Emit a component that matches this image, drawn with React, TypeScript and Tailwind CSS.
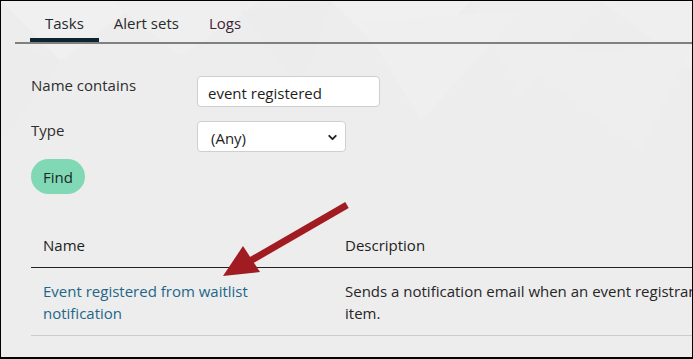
import { ChevronDown } from 'lucide-react'

const tabs = [
  { label: 'Tasks', active: true, color: 'text-[#1f2a30]' },
  { label: 'Alert sets', active: false, color: 'text-[#2a2a2a]' },
  { label: 'Logs', active: false, color: 'text-[#3f1f38]' },
]

function Backdrop() {
  // faint low-poly pattern behind the page
  return (
    <svg className="absolute inset-0 pointer-events-none" width="693" height="359" viewBox="0 0 693 359">
      <polygon points="0,0 140,0 60,60" fill="#f0f0f0" />
      <polygon points="110,0 260,0 180,55" fill="#efefef" />
      <polygon points="330,0 470,0 400,70" fill="#f0f0f0" />
      <polygon points="470,0 600,0 560,50 520,95" fill="#eeeeee" />
      <polygon points="600,0 693,0 693,70 640,30" fill="#efefef" />
      <polygon points="360,20 520,10 420,120" fill="#efefef" />
      <polygon points="0,40 60,60 0,140" fill="#ececec" />
      <polygon points="240,10 330,0 300,90" fill="#ececec" />
      <polygon points="520,60 693,40 640,150" fill="#eeeeee" />
    </svg>
  )
}

function Arrow() {
  return (
    <svg className="absolute inset-0 pointer-events-none" width="693" height="359" viewBox="0 0 693 359">
      <g transform="translate(-1,-1)">
        <line x1="347" y1="205" x2="250" y2="261" stroke="#a11b23" strokeWidth="7" />
        <polygon points="223,276 243,246 260,272" fill="#a11b23" />
      </g>
    </svg>
  )
}

export default function App() {
  return (
    <div className="relative w-[693px] h-[359px] overflow-hidden border-t border-l border-r border-b-2 border-black bg-[#ededed] text-[15px] text-[#262626] font-['Open_Sans',sans-serif]">
      <Backdrop />

      <div className="relative">
        {/* Tabs */}
        <div className="ml-[14px] flex pl-[15px] border-b-2 border-[#808080]">
          {tabs.map((t) => (
            <div
              key={t.label}
              className={`px-[15px] pt-[11px] pb-[4px] leading-[22px] border-b-4 ${t.active ? 'border-[#0d2530]' : 'border-transparent'} ${t.color}`}
            >
              {t.label}
            </div>
          ))}
        </div>

        {/* Filters */}
        <div className="pl-[30px] pt-[32px]">
          <div className="flex items-start">
            <div className="w-[166px] leading-[16px] pt-[1px] text-[#2e2e2e]">Name contains</div>
            <div className="w-[183px] h-[31px] bg-white border border-[#cfcfcf] rounded-[4px] pl-[10px] pt-[2px] flex items-center leading-[20px] text-[#1e1e1e]">
              event registered
            </div>
          </div>
          <div className="flex items-start mt-[14px]">
            <div className="w-[166px] leading-[16px] pt-[1px] text-[#2e2e2e]">Type</div>
            <div className="w-[149px] h-[31px] bg-white border border-[#cfcfcf] rounded-[4px] pl-[13px] pr-[6px] pt-[2px] flex items-center justify-between leading-[20px] text-[#1e1e1e]">
              <span>(Any)</span>
              <ChevronDown className="w-[13px] h-[13px] text-[#222]" strokeWidth={3.5} />
            </div>
          </div>
          <button className="mt-[7px] w-[54px] h-[35px] rounded-full bg-[#80d9b4] text-[#1b2a28] leading-[20px]">
            Find
          </button>
        </div>

        {/* Results table */}
        <div className="ml-[30px] mt-[28px] w-[800px]">
          <div className="flex pt-[12px] pb-[11px] leading-[22px] border-b border-[#222] text-[#1e1e1e]">
            <div className="w-[302px] shrink-0 pl-[12px]">Name</div>
            <div className="pl-[12px]">Description</div>
          </div>
          <div className="flex pt-[12px] pb-[11px] leading-[22px] border-b border-[#cccccc]">
            <div className="w-[302px] shrink-0 pl-[12px] pr-[40px] text-[#1f6689]">
              Event registered from waitlist notification
            </div>
            <div className="pl-[12px] text-[#262626] whitespace-nowrap">
              Sends a notification email when an event registrant is registered from a waitlist
              <br />
              item.
            </div>
          </div>
        </div>
      </div>

      <Arrow />
    </div>
  )
}
